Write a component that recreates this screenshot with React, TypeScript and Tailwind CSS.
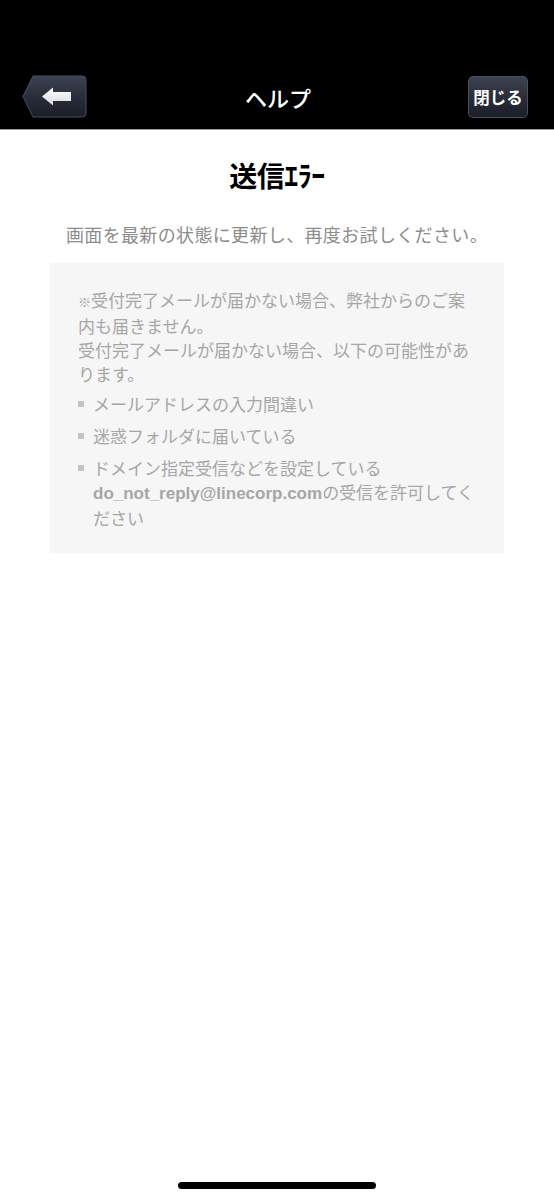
import React from "react";

const jp = { fontFamily: '"Noto Sans CJK JP", "Noto Sans", sans-serif' };

function BackButton() {
  return (
    <svg width="66" height="44" viewBox="0 0 66 44" className="block">
      <defs>
        <linearGradient id="bbg" x1="0" y1="0" x2="0" y2="1">
          <stop offset="0" stopColor="#3d4252" />
          <stop offset="0.5" stopColor="#2a2e3a" />
          <stop offset="1" stopColor="#1b1e27" />
        </linearGradient>
        <linearGradient id="arr" x1="0" y1="0" x2="0" y2="1">
          <stop offset="0" stopColor="#ffffff" />
          <stop offset="1" stopColor="#d6d8dc" />
        </linearGradient>
      </defs>
      <path
        d="M11 1 H60 a4 4 0 0 1 4 4 V38 a4 4 0 0 1 -4 4 H11 L1 21.5 Z"
        fill="url(#bbg)"
        stroke="#4a4f5e"
        strokeWidth="1"
      />
      <path d="M20 21.5 L31 12.5 V17 H49 V26 H31 V30.5 Z" fill="url(#arr)" />
    </svg>
  );
}

function Bullet() {
  return (
    <span className="w-[15px] shrink-0 pt-[9px]">
      <span className="block w-[6px] h-[6px] bg-[#c4c4c4]" />
    </span>
  );
}

export default function App() {
  return (
    <div className="min-h-[1200px] flex flex-col bg-white" style={jp}>
      <header className="h-[130px] bg-black border-b border-[#9a9a9a] flex items-end pb-[10px]">
        <div className="w-full flex items-center justify-between pl-[22px] pr-[26px]">
          <BackButton />
          <div className="text-white text-[22px] font-medium leading-none">ヘルプ</div>
          <div className="w-[60px] h-[42px] rounded-[5px] border border-[#4a4f5e] bg-gradient-to-b from-[#3d4252] via-[#2a2e3a] to-[#1b1e27] flex items-center justify-center text-white text-[16.5px] font-bold leading-none">
            閉じる
          </div>
        </div>
      </header>

      <main className="flex flex-col items-center">
        <h1 className="mt-[27px] text-[28px] font-bold leading-[36px] text-black tracking-[-0.5px]">
          送信ｴﾗｰ
        </h1>
        <p className="mt-[28px] text-[18px] leading-[26px] text-[#8c8c8c] tracking-[0.35px]">
          画面を最新の状態に更新し、再度お試しください。
        </p>
        <div className="mt-[16px] w-[454px] bg-[#f6f6f6] pl-[28px] pr-[26px] pt-[25px] pb-[23px] text-[17px] leading-[24px] text-[#a6a6a6]">
          <p>
            <span className="text-[13px]">※</span>
            <span>受付完了メールが届かない場合、弊社からのご案内も届きません。</span>
            <br />
            受付完了メールが届かない場合、以下の可能性があります。
          </p>
          <ul className="mt-[6px] flex flex-col gap-[8px]">
            <li className="flex">
              <Bullet />
              <span>メールアドレスの入力間違い</span>
            </li>
            <li className="flex">
              <Bullet />
              <span>迷惑フォルダに届いている</span>
            </li>
            <li className="flex">
              <Bullet />
              <span>
                ドメイン指定受信などを設定している
                <br />
                <b
                  className="font-bold"
                  style={{ fontFamily: '"Liberation Sans", "Noto Sans CJK JP", sans-serif' }}
                >
                  do_not_reply@linecorp.com
                </b>
                の受信を許可してください
              </span>
            </li>
          </ul>
        </div>
      </main>

      <div className="flex-1" />
      <div className="flex justify-center pb-[11px]">
        <div className="w-[198px] h-[7px] rounded-full bg-black" />
      </div>
    </div>
  );
}
